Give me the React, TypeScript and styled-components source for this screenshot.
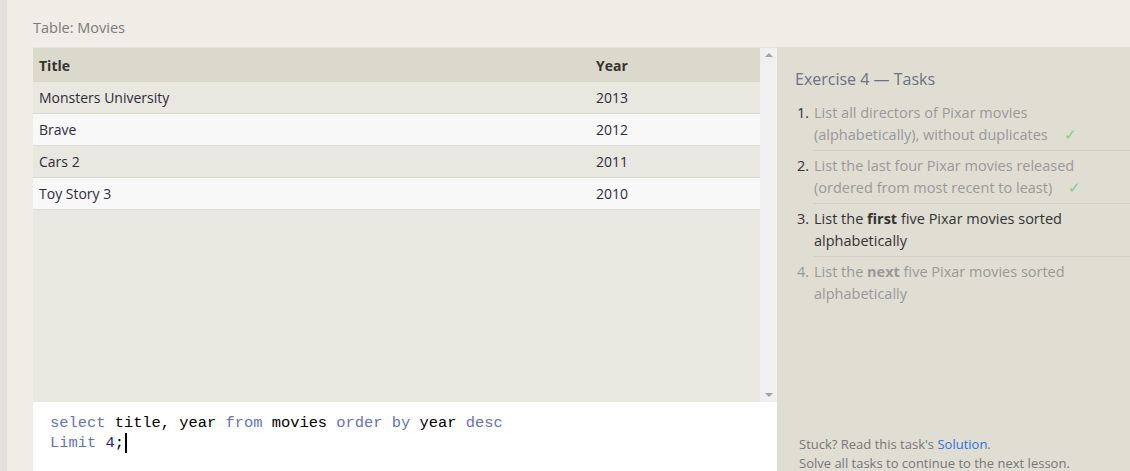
import React from 'react';
import styled, { createGlobalStyle } from 'styled-components';

const GlobalStyle = createGlobalStyle`
  html, body {
    margin: 0;
    padding: 0;
    background: #f0ede6;
  }
  body {
    font-family: 'Open Sans', 'Noto Sans', sans-serif;
    color: #333;
  }
`;

type Movie = { title: string; year: number };

const movies: Movie[] = [
  { title: 'Monsters University', year: 2013 },
  { title: 'Brave', year: 2012 },
  { title: 'Cars 2', year: 2011 },
  { title: 'Toy Story 3', year: 2010 },
];

type Task = { done?: boolean; current?: boolean; text: React.ReactNode };

const tasks: Task[] = [
  { done: true, text: <>List all directors of Pixar movies (alphabetically), without duplicates</> },
  { done: true, text: <>List the last four Pixar movies released (ordered from most recent to least)</> },
  { current: true, text: <>List the <b>first</b> five Pixar movies sorted alphabetically</> },
  { text: <>List the <b>next</b> five Pixar movies sorted alphabetically</> },
];

const App: React.FC = () => {
  return (
    <Page>
      <GlobalStyle />
      <Main>
        <TableLabel>Table: Movies</TableLabel>
        <Workspace>
          <LeftColumn>
            <TableArea>
              <TableScroll>
                <HeaderRow>
                  <HeadCell>Title</HeadCell>
                  <HeadCell>Year</HeadCell>
                </HeaderRow>
                {movies.map((m, i) => (
                  <Row key={m.title} $odd={i % 2 === 1}>
                    <Cell>{m.title}</Cell>
                    <Cell>{m.year}</Cell>
                  </Row>
                ))}
              </TableScroll>
              <Scrollbar>
                <Arrow $up />
                <Arrow />
              </Scrollbar>
            </TableArea>
            <Editor>
              <CodeLine>
                <Kw>select</Kw> title, year <Kw>from</Kw> movies <Kw>order</Kw> <Kw>by</Kw> year <Kw>desc</Kw>
              </CodeLine>
              <CodeLine>
                <Kw>Limit</Kw> <Num>4</Num>;<Caret />
              </CodeLine>
            </Editor>
          </LeftColumn>
          <TaskPanel>
            <TaskHeading>Exercise 4 — Tasks</TaskHeading>
            <TaskList>
              {tasks.map((t, i) => (
                <TaskItem key={i}>
                  <TaskNum $muted={!t.done && !t.current}>{i + 1}.</TaskNum>
                  <TaskText $active={!!t.current} $last={i === tasks.length - 1}>
                    {t.text}
                    {t.done && <Check>✓</Check>}
                  </TaskText>
                </TaskItem>
              ))}
            </TaskList>
            <Footer>
              Stuck? Read this task's <SolutionLink>Solution</SolutionLink>.
              <br />
              Solve all tasks to continue to the next lesson.
            </Footer>
          </TaskPanel>
        </Workspace>
      </Main>
    </Page>
  );
};

export default App;

const Page = styled.div`
  display: flex;
  height: 471px;
  overflow: hidden;
  background: #e4e0db;
  padding-left: 7px;
`;

const Main = styled.div`
  flex: 1;
  display: flex;
  flex-direction: column;
  background: #f0ede6;
  padding-left: 26px;
`;

const TableLabel = styled.div`
  font-size: 14.5px;
  line-height: 20px;
  color: #7a7a7a;
  padding-top: 18px;
  margin-bottom: 9px;
`;

const Workspace = styled.div`
  display: flex;
  height: 426px;
  flex-shrink: 0;
`;

const LeftColumn = styled.div`
  width: 744px;
  display: flex;
  flex-direction: column;
`;

const TableArea = styled.div`
  display: flex;
  height: 355px;
  border-top: 1px solid #e6e4dc;
  box-sizing: border-box;
`;

const TableScroll = styled.div`
  flex: 1;
  background: #e9e8e0;
`;

const HeaderRow = styled.div`
  display: grid;
  grid-template-columns: 557px 1fr;
  height: 34px;
  align-items: center;
  background: #dad9cc;
`;

const HeadCell = styled.div`
  padding-left: 6px;
  font-weight: 700;
  font-size: 14px;
  color: #333;
`;

const Row = styled.div<{ $odd: boolean }>`
  display: grid;
  grid-template-columns: 557px 1fr;
  height: 31px;
  align-items: center;
  background: ${(p) => (p.$odd ? '#f8f8f8' : '#e9e8e0')};
  border-bottom: 1px solid #dcdbd3;
`;

const Cell = styled.div`
  padding-left: 6px;
  font-size: 14px;
  color: #2f2b3a;
`;

const Scrollbar = styled.div`
  width: 17px;
  background: #f0f0f0;
  display: flex;
  flex-direction: column;
  justify-content: space-between;
  align-items: center;
  padding: 5px 0;
  box-sizing: border-box;
`;

const Arrow = styled.div<{ $up?: boolean }>`
  width: 0;
  height: 0;
  border-left: 4px solid transparent;
  border-right: 4px solid transparent;
  ${(p) =>
    p.$up ? 'border-bottom: 4px solid #a3a3a3;' : 'border-top: 4px solid #a3a3a3;'}
`;

const Editor = styled.div`
  flex: 1;
  background: #fff;
  padding: 11px 17px;
  font-family: 'Liberation Mono', 'DejaVu Sans Mono', monospace;
  font-size: 15.4px;
  line-height: 20px;
  color: #000;
`;

const CodeLine = styled.div`
  white-space: pre;
`;

const Kw = styled.span`
  color: #6373b8;
`;

const Num = styled.span`
  color: #1c1ca8;
`;

const Caret = styled.span`
  display: inline-block;
  width: 2px;
  height: 20px;
  background: #000;
  vertical-align: top;
  margin-left: 1px;
`;

const TaskPanel = styled.div`
  flex: 1;
  background: #e0ded3;
  display: flex;
  flex-direction: column;
  padding-left: 18px;
`;

const TaskHeading = styled.div`
  font-size: 16px;
  line-height: 22px;
  color: #6b7280;
  padding-top: 21px;
  margin-bottom: 12px;
`;

const TaskList = styled.ol`
  list-style: none;
  margin: 0;
  padding: 0;
`;

const TaskItem = styled.li`
  display: flex;
`;

const TaskNum = styled.span<{ $muted: boolean }>`
  width: 18px;
  flex-shrink: 0;
  text-align: right;
  padding-right: 4px;
  box-sizing: border-box;
  font-size: 14.5px;
  line-height: 22px;
  color: ${(p) => (p.$muted ? '#999' : '#333')};
`;

const TaskText = styled.div<{ $active: boolean; $last: boolean }>`
  flex: 1;
  padding: 0 20px 4px 1px;
  margin-bottom: 4px;
  font-size: 14.5px;
  line-height: 22px;
  color: ${(p) => (p.$active ? '#333' : '#999')};
  border-bottom: ${(p) => (p.$last ? 'none' : '1px solid #d2d0c6')};
  b {
    font-weight: 700;
  }
`;

const Check = styled.span`
  color: #7ccc8c;
  margin-left: 16px;
  line-height: 1;
`;

const Footer = styled.div`
  margin-top: auto;
  padding-left: 4px;
  font-size: 13px;
  line-height: 19px;
  color: #777;
`;

const SolutionLink = styled.a`
  color: #2f6fe0;
  text-decoration: none;
`;
